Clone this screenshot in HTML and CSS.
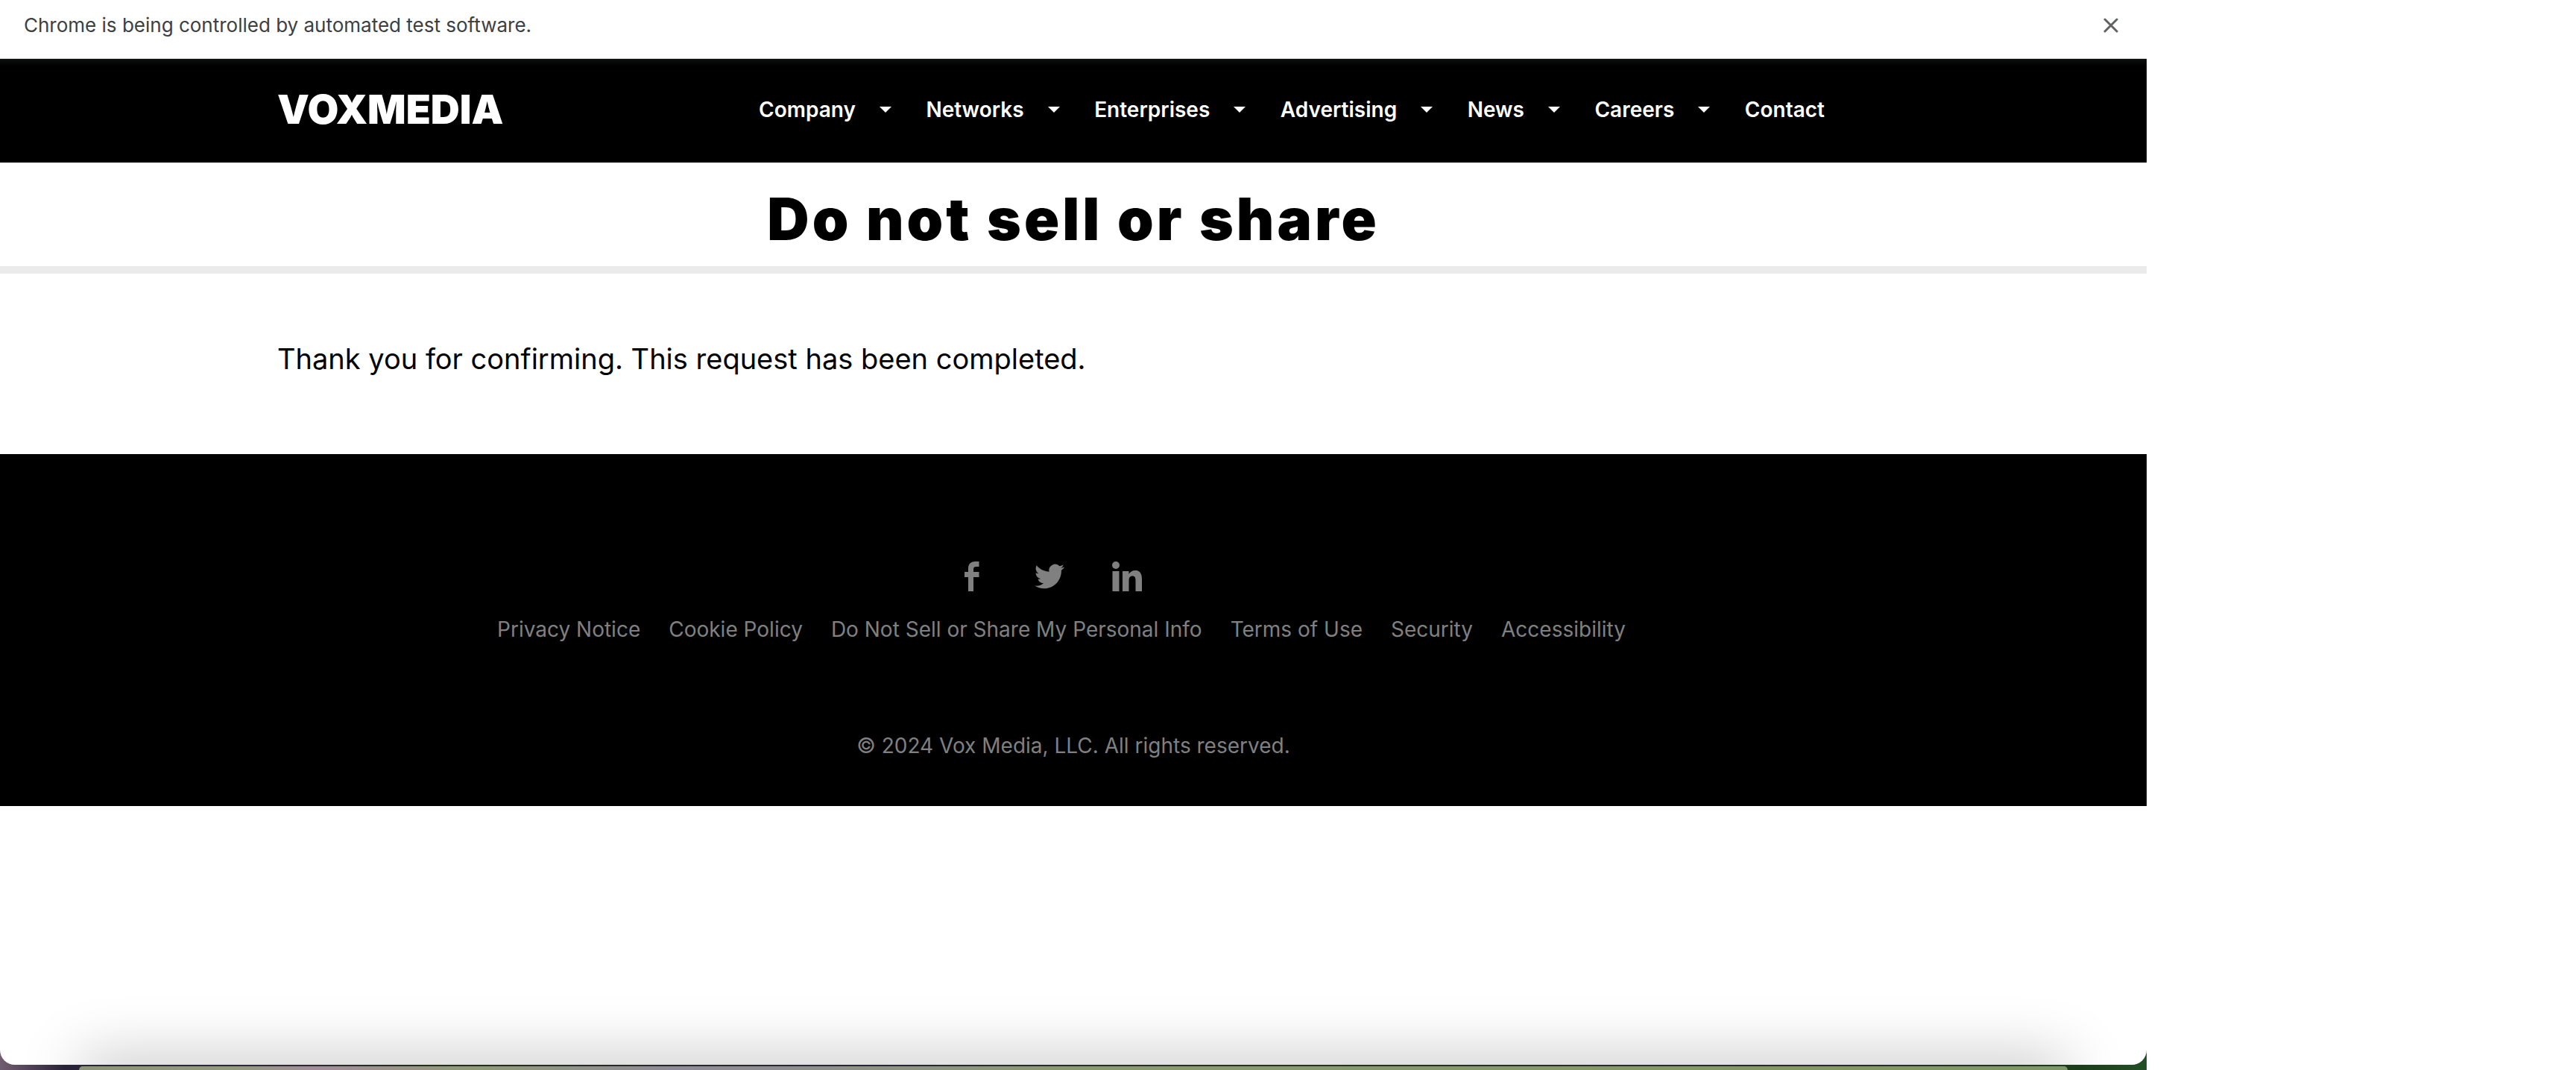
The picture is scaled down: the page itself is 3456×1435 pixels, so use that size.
FILE: index.html
```html
<!DOCTYPE html>
<html lang="en">
<head>
<meta charset="utf-8">
<title>Do not sell or share</title>
<link rel="stylesheet" href="styles.css">
</head>
<body>
<div class="desktop">
  <div class="window">
    <div class="infobar">
      <span>Chrome is being controlled by automated test software.</span>
      <button class="close" type="button" aria-label="Close">
        <svg viewBox="0 0 20 20" width="20" height="20"><path d="M2 2L18 18M18 2L2 18" fill="none" stroke="#5f6368" stroke-width="3" stroke-linecap="round"/></svg>
      </button>
    </div>
    <header class="header">
      <div class="container header-row">
        <a class="logo" href="#">VOXMEDIA</a>
        <nav class="nav">
          <a class="has-menu" href="#">Company</a>
          <a class="has-menu" href="#">Networks</a>
          <a class="has-menu" href="#">Enterprises</a>
          <a class="has-menu" href="#">Advertising</a>
          <a class="has-menu" href="#">News</a>
          <a class="has-menu" href="#">Careers</a>
          <a href="#">Contact</a>
        </nav>
      </div>
    </header>
    <h1 class="title">Do not sell or share</h1>
    <main class="container message">
      <p>Thank you for confirming. This request has been completed.</p>
    </main>
    <footer class="footer">
      <div class="social">
        <a href="#" aria-label="Facebook"><svg viewBox="0 0 40 40" width="40" height="40"><path d="M15 40V21h-5v-7h5V9.500C15 3.500 18.500 0 24 0h5.500v7H26c-3 0-4 1-4 3.500V14h7.500v7H22v19z"/></svg></a>
        <a href="#" aria-label="Twitter"><svg viewBox="0 0 24 24" width="40" height="40"><path d="M23.950 4.570a10 10 0 0 1-2.820.770 4.960 4.960 0 0 0 2.160-2.720c-.950.550-2 .950-3.130 1.180a4.920 4.920 0 0 0-8.380 4.480C7.690 8.090 4.070 6.130 1.640 3.160a4.920 4.920 0 0 0 1.520 6.570 4.900 4.900 0 0 1-2.230-.610v.060a4.920 4.920 0 0 0 3.950 4.830 5 5 0 0 1-2.210.080 4.940 4.940 0 0 0 4.600 3.420A9.870 9.870 0 0 1 0 19.540a14 14 0 0 0 7.550 2.210c9.050 0 14-7.500 14-13.980 0-.210 0-.420-.020-.630a9.940 9.940 0 0 0 2.460-2.550z"/></svg></a>
        <a href="#" aria-label="LinkedIn"><svg viewBox="0 0 40 40" width="40" height="40"><circle cx="5" cy="5" r="5"/><path d="M0.500 13h9v27h-9zM14 13h8.500v4c1.500-3 4.500-5 8.500-5 7 0 9 5 9 12v16h-8.500V25.500c0-4-1-6-4.200-6-3.300 0-4.800 2.300-4.800 6V40H14z"/></svg></a>
      </div>
      <nav class="legal">
        <a href="#">Privacy Notice</a>
        <a href="#">Cookie Policy</a>
        <a href="#">Do Not Sell or Share My Personal Info</a>
        <a href="#">Terms of Use</a>
        <a href="#">Security</a>
        <a href="#">Accessibility</a>
      </nav>
      <p class="copyright">© 2024 Vox Media, LLC. All rights reserved.</p>
    </footer>
    <div class="dock-shadow"></div>
  </div>
  <div class="dock"></div>
</div>
</body>
</html>
```
FILE: styles.css
```css
* { box-sizing: border-box; }

body {
  margin: 0;
  display: grid;
  grid-template-columns: 5fr 1fr;
  background: #fff;
  color: #000;
  font-family: Inter, "Open Sans", sans-serif;
  font-size: 28px;
  line-height: 36px;
}

a { color: inherit; text-decoration: none; }
p, h1 { margin: 0; }

.desktop {
  display: flex;
  flex-direction: column;
  min-height: 100vh;
  background: linear-gradient(90deg, #715d70, #2a2338 3%, #30273a 12%, #223016 20%, #2b2438 40%, #24351b 60%, #2c2733 85%, #1c3d1a 97%, #245026);
}

.window {
  position: relative;
  flex: 1;
  overflow: hidden;
  background: #fff;
  border-radius: 0 0 20px 20px;
}

.container {
  max-width: 2136px;
  margin: 0 auto;
}

.infobar {
  display: flex;
  align-items: center;
  justify-content: space-between;
  padding: 16px 38px 26px 32px;
  border-bottom: 1px solid #dadada;
  color: #3c4043;
  font-size: 26px;
}

.close {
  display: flex;
  padding: 0;
  border: 0;
  background: none;
}

.header {
  padding: 40px 0 44px;
  background: linear-gradient(#0b100e, #000 10px);
  color: #fff;
}

.header-row {
  display: flex;
  align-items: center;
  justify-content: space-between;
  padding-right: 60px;
}

.logo {
  font-size: 54px;
  font-weight: 900;
  line-height: 55px;
}

.nav {
  display: flex;
  flex-basis: 1430px;
  justify-content: space-between;
  font-weight: 600;
}

.has-menu {
  display: flex;
  align-items: center;
  gap: 32px;
}

.has-menu::after {
  content: "";
  border: 8px solid transparent;
  border-top-color: #fff;
  border-bottom: 0;
}

.title {
  padding: 36px 0 23px;
  border-bottom: 10px solid #ebebeb;
  font-size: 78px;
  font-weight: 900;
  line-height: 80px;
  letter-spacing: 4px;
  text-align: center;
}

.message {
  padding: 90px 0 104px;
  font-size: 38px;
  line-height: 48px;
}

.footer {
  padding: 144px 0 63px;
  background: #000;
  color: #808080;
  text-align: center;
}

.social {
  display: flex;
  justify-content: center;
  gap: 64px;
  padding-right: 64px;
}

.social a { display: flex; }
.social svg { fill: #808080; }

.legal {
  display: flex;
  justify-content: center;
  gap: 38px;
  padding: 33px 32px 0 0;
}

.copyright { padding-top: 120px; }

/* Soft shade cast by the panel that sits under the window edge */
.dock-shadow {
  position: absolute;
  right: 110px;
  bottom: -40px;
  left: 110px;
  height: 40px;
  border-radius: 20px;
  box-shadow: 0 0 80px 8px rgba(0, 0, 0, 0.25);
}

.dock {
  height: 5px;
  margin: 2px 106px 0;
  border-radius: 20px 20px 0 0;
  background: linear-gradient(90deg, #8b937b, #929a80 8%, #a38c9b 12%, #8f9a78 20%, #8f8a98 30%, #8a9a70 50%, #7f9764);
}
```
